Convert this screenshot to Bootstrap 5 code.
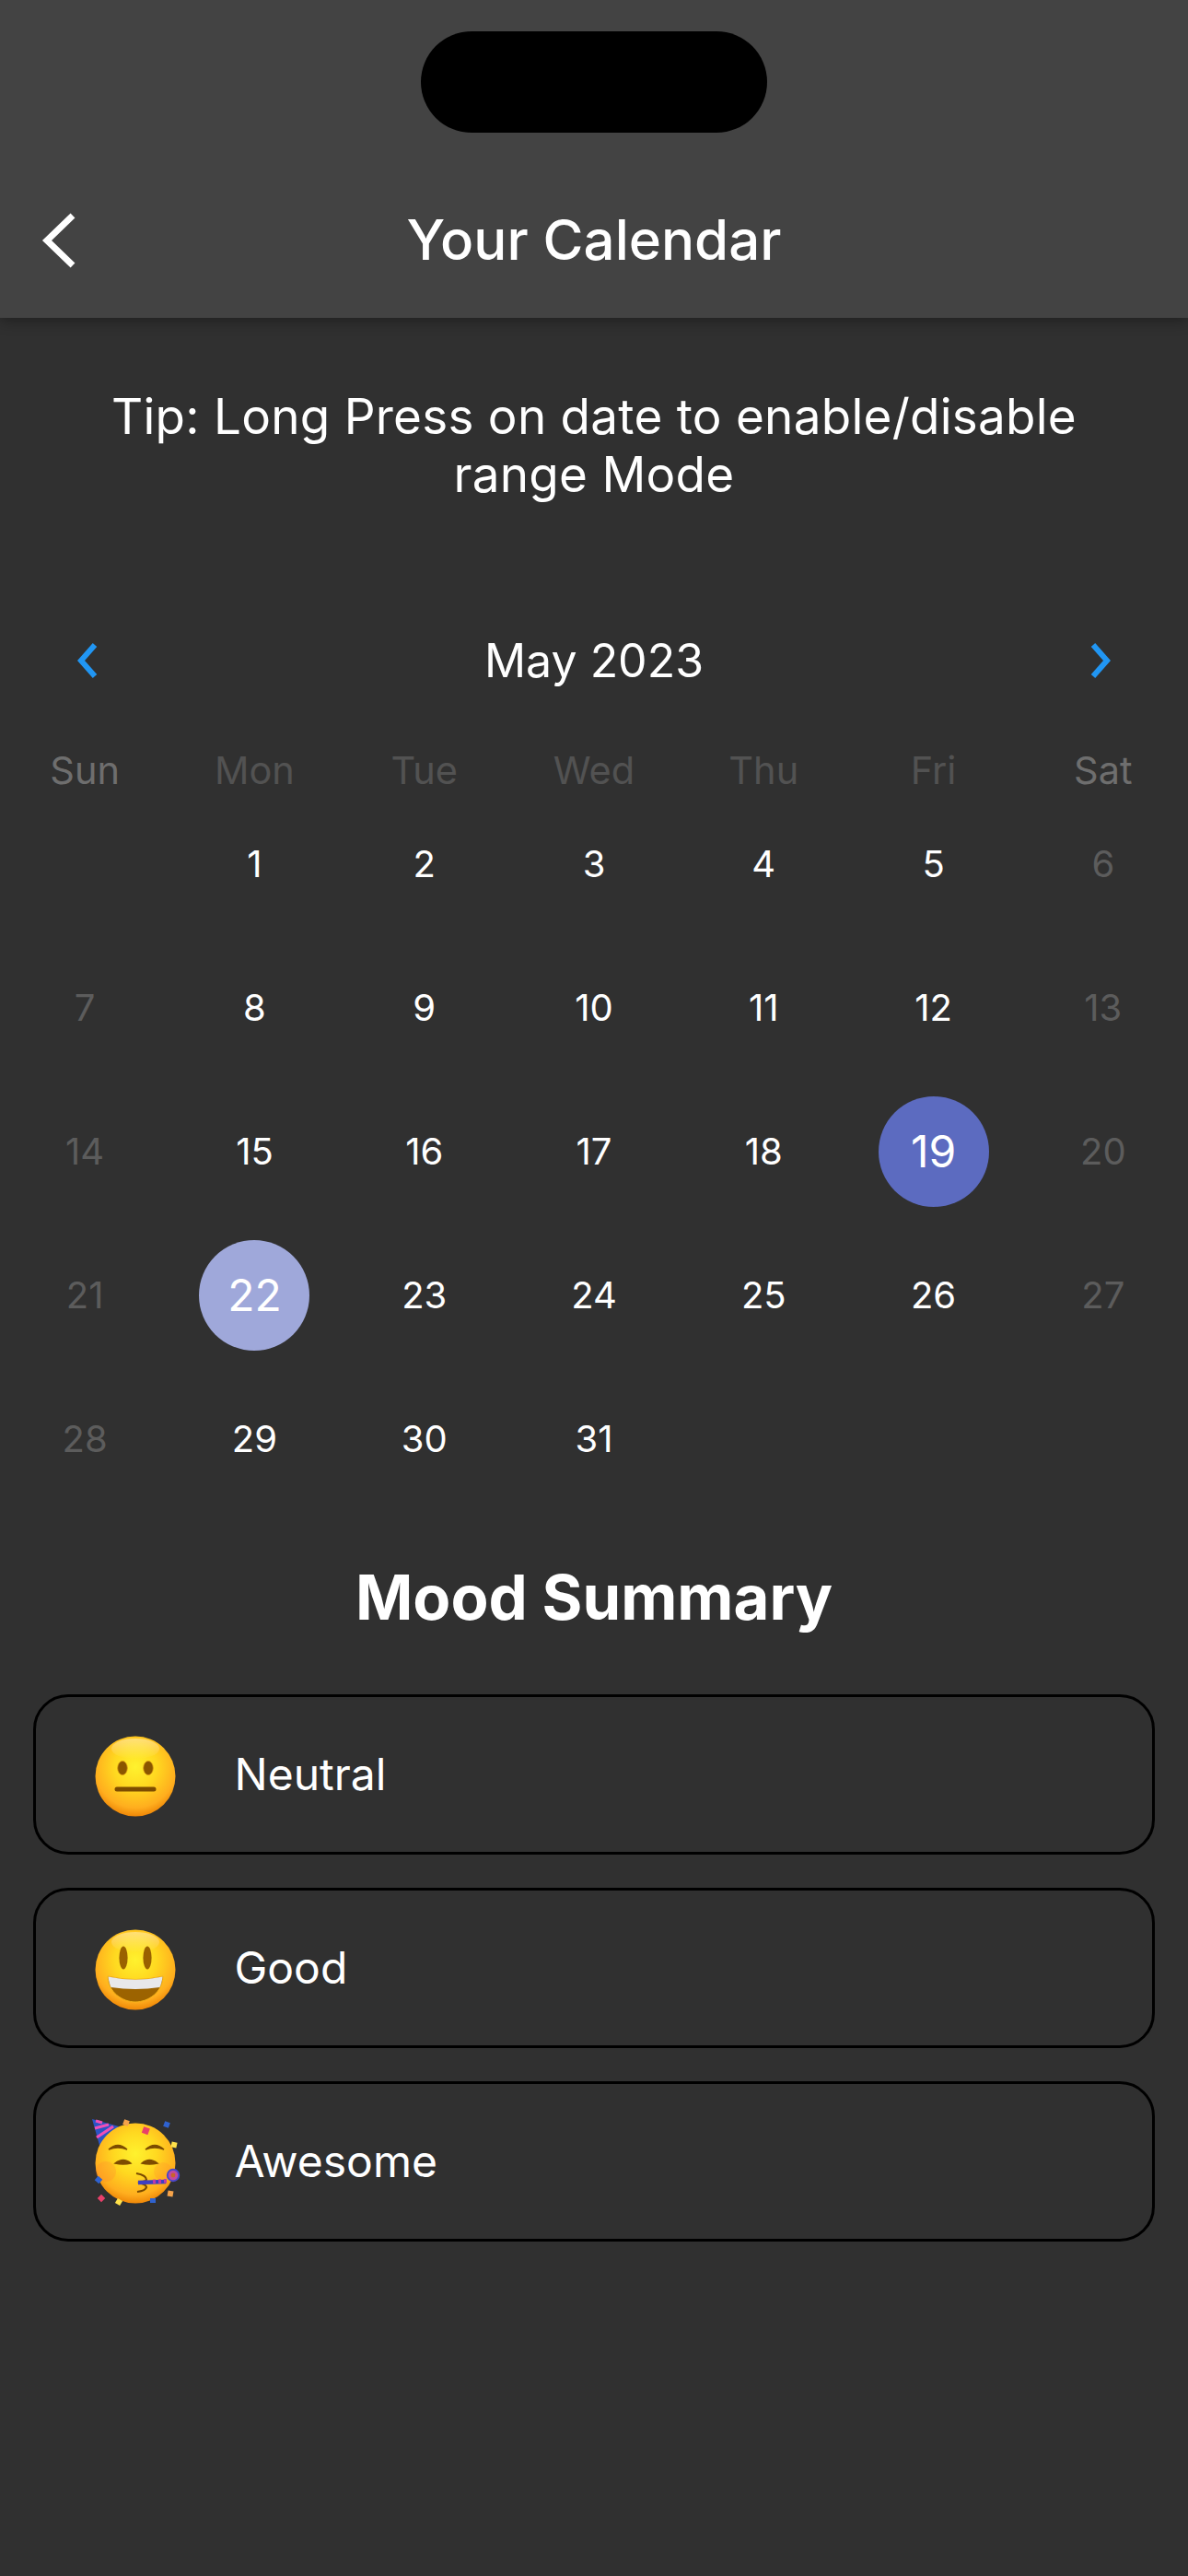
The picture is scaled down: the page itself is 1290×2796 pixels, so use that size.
<!DOCTYPE html>
<html lang="en">
<head>
<meta charset="utf-8">
<title>Your Calendar</title>
<link href="https://cdn.jsdelivr.net/npm/bootstrap@5.3.0/dist/css/bootstrap.min.css" rel="stylesheet">
<style>
html,body{width:1290px;height:2796px;overflow:hidden}
body{background:#303030;color:#fff;font-family:Inter,"Liberation Sans",sans-serif}
.app-head{height:345px;background:#434343;box-shadow:0 4px 14px rgba(0,0,0,.32);padding-top:34px}
.island{width:376px;height:110px;background:#000;border-radius:55px;margin:0 auto}
.head-row{height:90px;margin-top:71px;padding:0 41px}
.head-row svg{width:48px;height:70px;flex:none}
.head-title{font-size:60px;font-weight:500;line-height:90px;margin:0}
.spacer{width:48px}
.tip{font-size:53px;line-height:63px;padding:0 80px;margin-top:76px;letter-spacing:.25px}
.month-row{height:60px;margin-top:140px;padding:0 84px}
.month-row svg{width:22px;height:40px;flex:none}
.month-name{font-size:50px;line-height:60px}
.week-row{height:47px;margin-top:66px}
.wd{font-size:41.5px;line-height:46px;color:#525252}
.wd-end{color:#6e6e6e}
.day-row{height:156px}
.day{height:156px;font-size:40px}
.day-off{color:#5c5c5c}
.day-sel{width:120px;height:120px;border-radius:50%;font-size:48px;background:#5c6bc0}
.day-sel-b{background:#9fa8da}
.mood-title{font-size:67px;font-weight:700;line-height:78px;margin:55px 0 66px}
.mood-list{padding:0 36px;gap:36px}
.mood-item{height:174px;border:3px solid #000;border-radius:38px;padding-left:53px;background:transparent;gap:52.5px}
.mood-item svg{width:110px;height:110px;flex:none;overflow:visible;margin-top:4px}
.mood-name{font-size:48px}
</style>
</head>
<body>
<svg width="0" height="0" class="position-absolute">
  <defs>
    <radialGradient id="faceG" cx=".5" cy=".38" r=".64">
      <stop offset="0" stop-color="#fff22e"/>
      <stop offset=".42" stop-color="#ffd820"/>
      <stop offset=".8" stop-color="#ffae1e"/>
      <stop offset="1" stop-color="#ec8004"/>
    </radialGradient>
    <linearGradient id="hiG" x1="0" y1="0" x2="0" y2="1">
      <stop offset="0" stop-color="#fff" stop-opacity=".4"/>
      <stop offset="1" stop-color="#fff" stop-opacity="0"/>
    </linearGradient>
  </defs>
</svg>

<header class="app-head">
  <div class="island"></div>
  <div class="head-row d-flex align-items-center justify-content-between">
    <svg viewBox="0 0 48 70" fill="none"><polyline points="38,9 10,36 38,63" stroke="#fff" stroke-width="7"/></svg>
    <h1 class="head-title">Your Calendar</h1>
    <div class="spacer"></div>
  </div>
</header>

<p class="tip text-center mb-0">Tip: Long Press on date to enable/disable range Mode</p>

<div class="month-row d-flex align-items-center justify-content-between">
  <svg viewBox="0 0 22 40" fill="none"><polyline points="19,3 4,20 19,37" stroke="#2196f3" stroke-width="6"/></svg>
  <div class="month-name">May 2023</div>
  <svg viewBox="0 0 22 40" fill="none"><polyline points="3,3 18,20 3,37" stroke="#2196f3" stroke-width="6"/></svg>
</div>

<div class="row g-0 week-row text-center">
  <div class="col wd wd-end">Sun</div><div class="col wd">Mon</div><div class="col wd">Tue</div><div class="col wd">Wed</div><div class="col wd">Thu</div><div class="col wd">Fri</div><div class="col wd wd-end">Sat</div>
</div>

<div class="row g-0 day-row">
  <div class="col day"></div>
  <div class="col day d-flex align-items-center justify-content-center">1</div>
  <div class="col day d-flex align-items-center justify-content-center">2</div>
  <div class="col day d-flex align-items-center justify-content-center">3</div>
  <div class="col day d-flex align-items-center justify-content-center">4</div>
  <div class="col day d-flex align-items-center justify-content-center">5</div>
  <div class="col day day-off d-flex align-items-center justify-content-center">6</div>
</div>
<div class="row g-0 day-row">
  <div class="col day day-off d-flex align-items-center justify-content-center">7</div>
  <div class="col day d-flex align-items-center justify-content-center">8</div>
  <div class="col day d-flex align-items-center justify-content-center">9</div>
  <div class="col day d-flex align-items-center justify-content-center">10</div>
  <div class="col day d-flex align-items-center justify-content-center">11</div>
  <div class="col day d-flex align-items-center justify-content-center">12</div>
  <div class="col day day-off d-flex align-items-center justify-content-center">13</div>
</div>
<div class="row g-0 day-row">
  <div class="col day day-off d-flex align-items-center justify-content-center">14</div>
  <div class="col day d-flex align-items-center justify-content-center">15</div>
  <div class="col day d-flex align-items-center justify-content-center">16</div>
  <div class="col day d-flex align-items-center justify-content-center">17</div>
  <div class="col day d-flex align-items-center justify-content-center">18</div>
  <div class="col day d-flex align-items-center justify-content-center"><span class="day-sel d-flex align-items-center justify-content-center">19</span></div>
  <div class="col day day-off d-flex align-items-center justify-content-center">20</div>
</div>
<div class="row g-0 day-row">
  <div class="col day day-off d-flex align-items-center justify-content-center">21</div>
  <div class="col day d-flex align-items-center justify-content-center"><span class="day-sel day-sel-b d-flex align-items-center justify-content-center">22</span></div>
  <div class="col day d-flex align-items-center justify-content-center">23</div>
  <div class="col day d-flex align-items-center justify-content-center">24</div>
  <div class="col day d-flex align-items-center justify-content-center">25</div>
  <div class="col day d-flex align-items-center justify-content-center">26</div>
  <div class="col day day-off d-flex align-items-center justify-content-center">27</div>
</div>
<div class="row g-0 day-row">
  <div class="col day day-off d-flex align-items-center justify-content-center">28</div>
  <div class="col day d-flex align-items-center justify-content-center">29</div>
  <div class="col day d-flex align-items-center justify-content-center">30</div>
  <div class="col day d-flex align-items-center justify-content-center">31</div>
  <div class="col day"></div><div class="col day"></div><div class="col day"></div>
</div>

<h2 class="mood-title text-center">Mood Summary</h2>

<div class="mood-list d-flex flex-column">
  <div class="mood-item d-flex align-items-center">
    <svg viewBox="-55 -55 110 110">
      <circle r="43.5" fill="url(#faceG)"/>
      <ellipse cy="-30" rx="26" ry="11" fill="url(#hiG)"/>
      <ellipse cx="-14" cy="-9" rx="5.3" ry="7.6" fill="#8a5600" stroke="#d99a10" stroke-width=".8"/>
      <ellipse cx="14" cy="-9" rx="5.3" ry="7.6" fill="#8a5600" stroke="#d99a10" stroke-width=".8"/>
      <rect x="-22.500" y="11.500" width="45" height="5" rx="2.500" fill="#7d4c00"/>
    </svg>
    <div class="mood-name">Neutral</div>
  </div>
  <div class="mood-item d-flex align-items-center">
    <svg viewBox="-55 -55 110 110">
      <circle r="43.5" fill="url(#faceG)"/>
      <ellipse cy="-30" rx="26" ry="11" fill="url(#hiG)"/>
      <ellipse cx="-13" cy="-13" rx="4.6" ry="12.5" fill="#9a6100"/>
      <ellipse cx="13" cy="-13" rx="4.6" ry="12.5" fill="#9a6100"/>
      <path d="M-30 7Q0 14 30 7C30 24 14 35 0 35C-14 35 -30 24 -30 7Z" fill="#9c6300" stroke="#f5b319" stroke-width="1"/>
      <path d="M-29.500 7.500Q0 14 29.500 7.500C29 12 28 16 26.500 19Q0 23 -26.500 19C-28 16 -29 12 -29.500 7.500Z" fill="#e8e8ea"/>
    </svg>
    <div class="mood-name">Good</div>
  </div>
  <div class="mood-item d-flex align-items-center">
    <svg viewBox="-55 -55 110 110">
      <path d="M-47 -48L-18 -40L-38 -16Z" fill="#2b54c4"/>
      <path d="M-43 -46L-36 -44M-44 -38L-29 -42M-42 -28L-24 -40" stroke="#f04fb7" stroke-width="3.200" fill="none"/>
      <circle r="43.5" fill="url(#faceG)"/>
      <circle cx="-32" cy="9" r="11" fill="#ff7a30" opacity=".22"/>
      <circle cx="30" cy="9" r="10" fill="#ff7a30" opacity=".18"/>
      <path d="M-29 -15Q-19 -24 -9 -15Q-19 -19 -29 -15Z" fill="#7d4c00" stroke="#7d4c00" stroke-width="1.400"/>
      <path d="M11 -15Q21 -24 31 -15Q21 -19 11 -15Z" fill="#7d4c00" stroke="#7d4c00" stroke-width="1.400"/>
      <path d="M-22 0Q-13 -7 -5 0Q-13 2 -22 0Z" fill="#7d4c00" stroke="#7d4c00" stroke-width="1.500"/>
      <path d="M7 0Q15 -7 24 0Q15 2 7 0Z" fill="#7d4c00" stroke="#7d4c00" stroke-width="1.500"/>
      <path d="M1 11Q12 13 12 18Q11 20 3 21Q12 23 12 26Q11 30 2 31" fill="none" stroke="#7a4a00" stroke-width="2.200"/>
      <path d="M3 21L33 20" stroke="#3f3fc0" stroke-width="4.500"/>
      <path d="M19 20L37 19" stroke="#c03aa8" stroke-width="4.500" stroke-dasharray="3 3"/>
      <circle cx="41" cy="13" r="6.200" fill="#c04aa0" stroke="#4a47c8" stroke-width="2"/>
      <circle cx="41" cy="13" r="2.400" fill="#c8642a"/>
      <rect x="-13" y="-47" width="6" height="6" fill="#f5a34a" transform="rotate(20 -10 -44)"/>
      <rect x="8" y="-39" width="7" height="7" fill="#e8406a" transform="rotate(20 11 -36)"/>
      <rect x="31" y="-45" width="6" height="6" fill="#2f62cf" transform="rotate(20 34 -42)"/>
      <rect x="39" y="-23" width="6" height="6" fill="#ffe14a" transform="rotate(12 42 -20)"/>
      <rect x="-43" y="15" width="6" height="6" fill="#2f62cf" transform="rotate(40 -40 18)"/>
      <rect x="-40" y="35" width="6" height="6" fill="#e8406a" transform="rotate(45 -37 38)"/>
      <rect x="-21" y="39" width="6" height="6" fill="#ffe14a" transform="rotate(30 -18 42)"/>
      <rect x="16" y="38" width="6" height="5" fill="#2f62cf"/>
      <rect x="35" y="30" width="6" height="6" fill="#f5a34a" transform="rotate(10 38 33)"/>
    </svg>
    <div class="mood-name">Awesome</div>
  </div>
</div>
<script src="https://cdn.jsdelivr.net/npm/bootstrap@5.3.0/dist/js/bootstrap.bundle.min.js"></script>
</body>
</html>
